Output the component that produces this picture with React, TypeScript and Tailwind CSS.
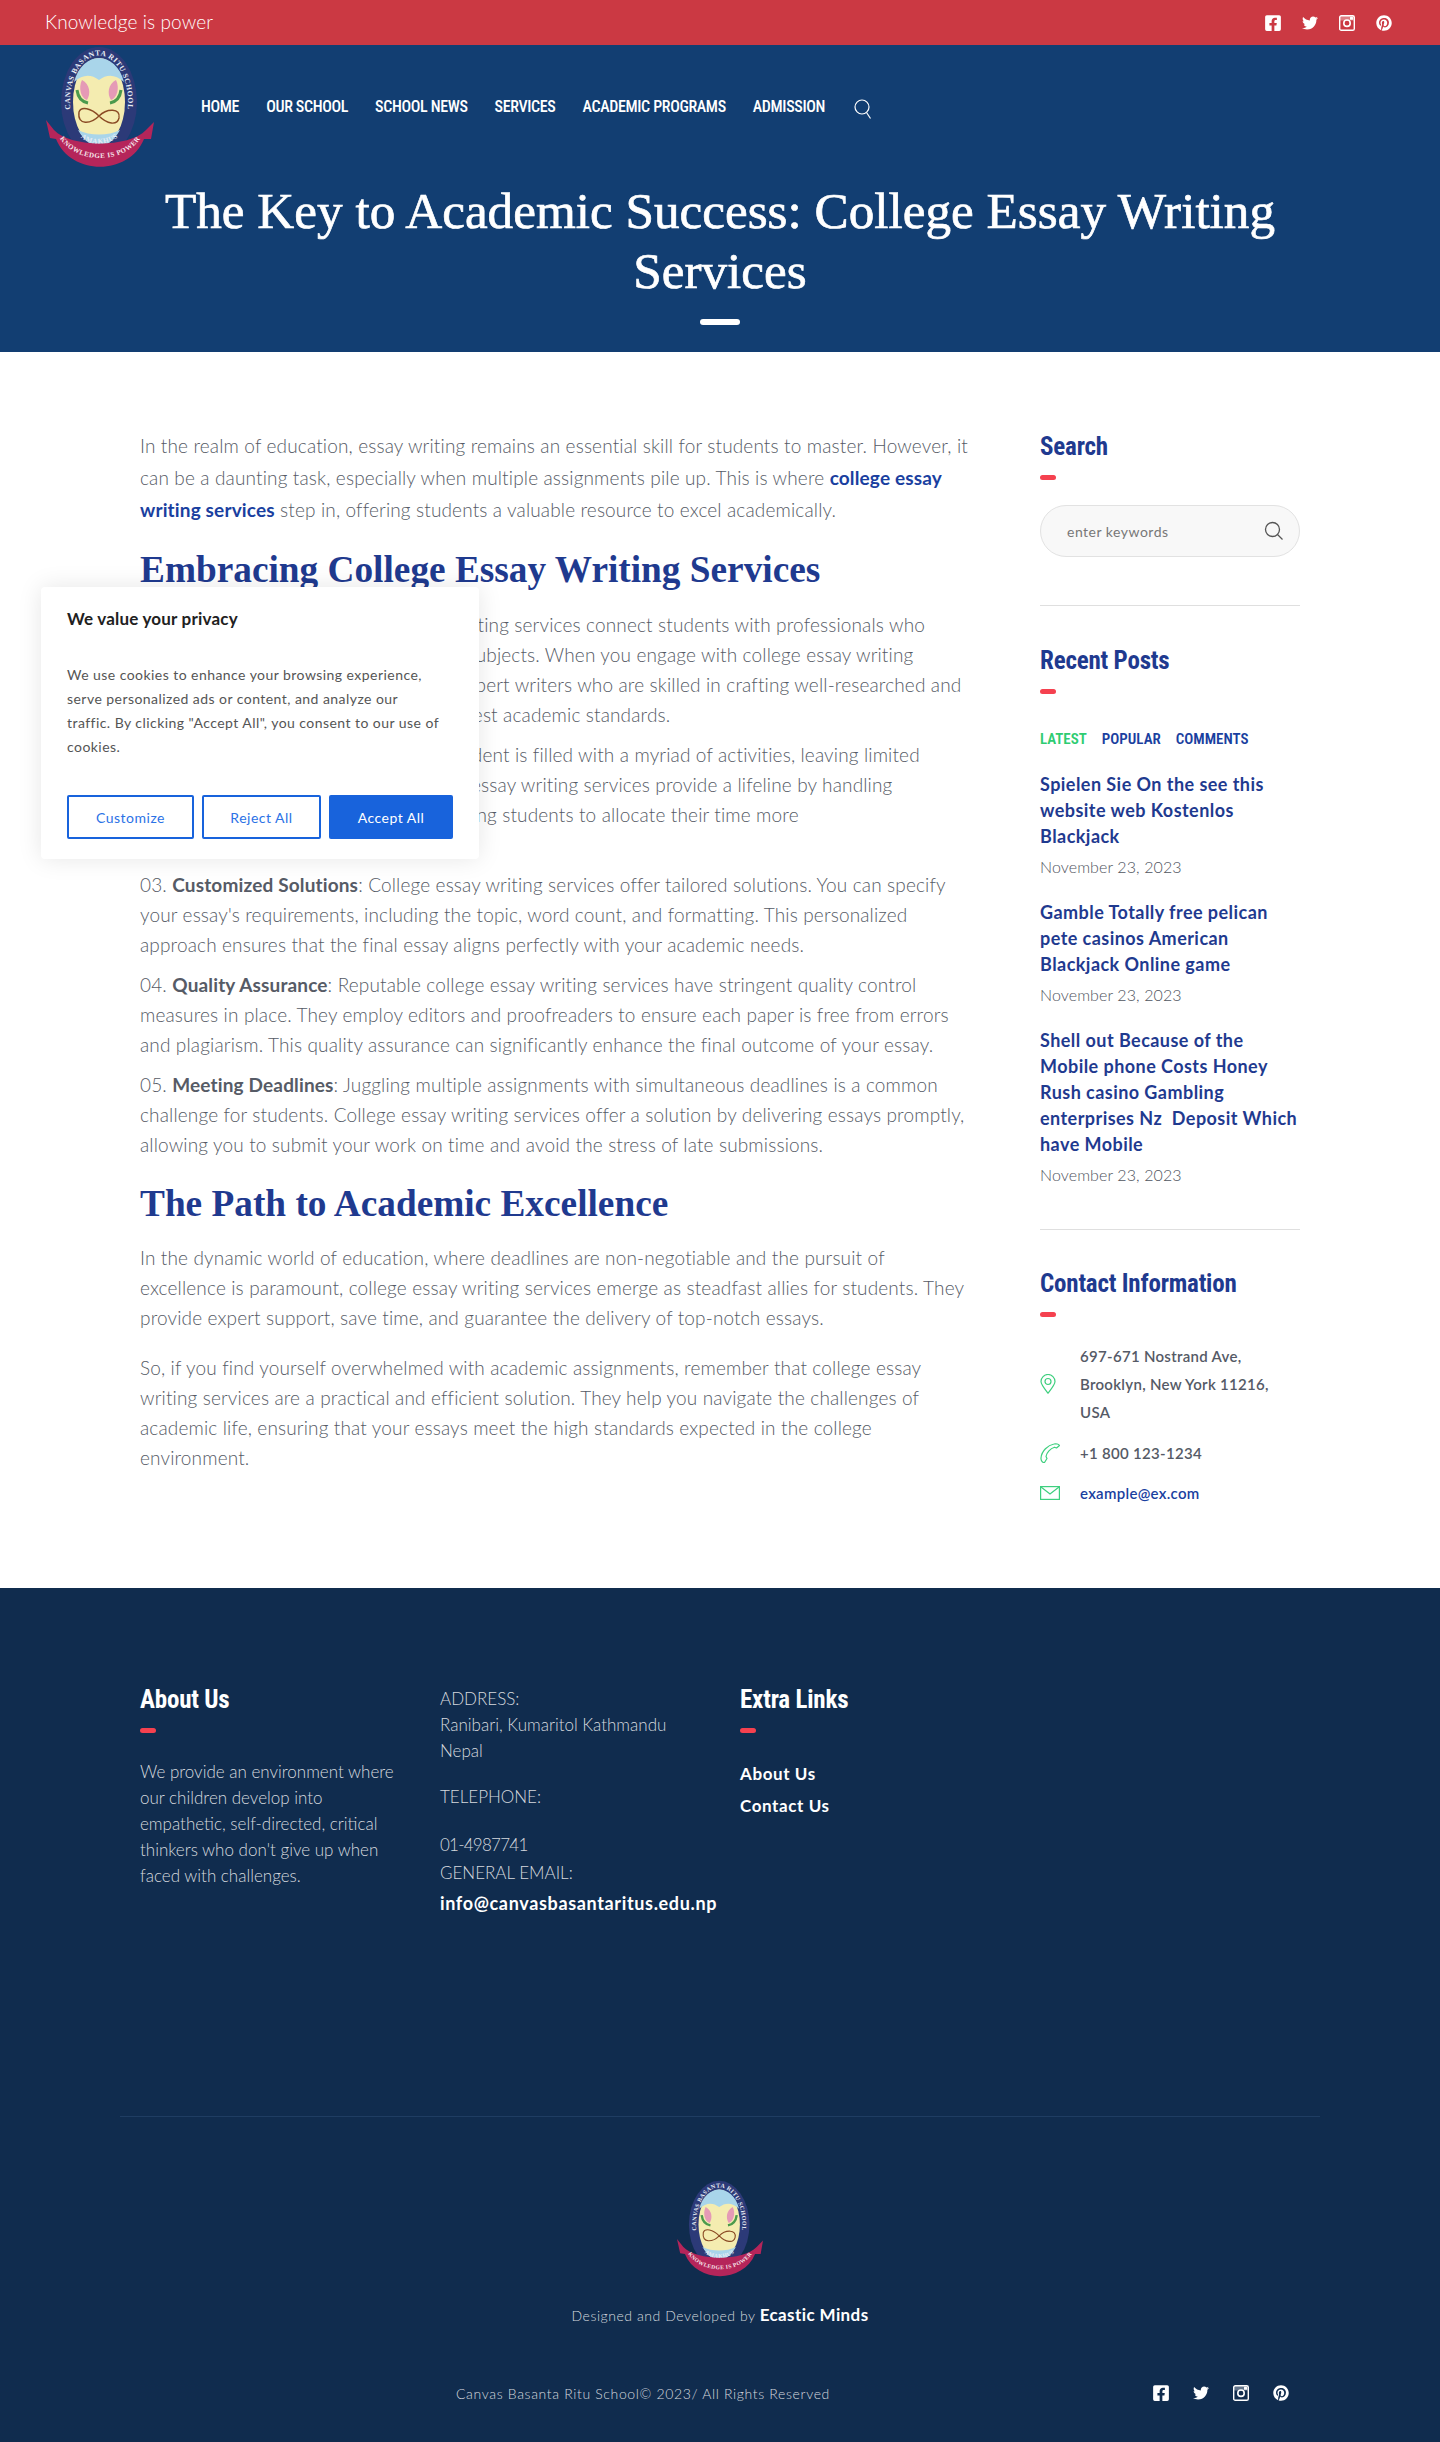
import React from "react";
import { FaFacebookSquare, FaTwitter, FaPinterest } from "react-icons/fa";

const body = "font-['Lato','Open_Sans',sans-serif]";
const narrow = "font-['Roboto',sans-serif] [font-stretch:75%]";
const serif = "font-['Liberation_Serif',serif]";

function Logo({ id, w, h }: { id: string; w: number; h: number }) {
  return (
    <svg width={w} height={h} viewBox="0 0 110 123" aria-hidden="true">
      <defs>
        <path id={`${id}-top`} d="M30 82 A29 46.5 0 1 1 78 82" />
        <path id={`${id}-mid`} d="M34 90 C44 100 64 100 74 90" />
        <path id={`${id}-rib`} d="M14 91 C30 119 80 119 96 91" />
      </defs>
      <ellipse cx="54" cy="56" rx="38" ry="55" fill="#2c3a78" />
      <ellipse cx="54" cy="56" rx="26" ry="44" fill="#f4ecb0" />
      <path d="M29 36 C33 20 44 12 54 12 C64 12 75 20 79 36 C70 28 62 28 54 34 C46 28 38 28 29 36 Z" fill="#a9d5ea" />
      <path d="M33 84 C45 90 63 90 75 84 C68 96 61 100 54 100 C47 100 40 96 33 84 Z" fill="#a9d5ea" />
      <path d="M37 34 C45 38 46 48 42 54 C36 52 33 42 37 34 Z M71 34 C75 42 72 52 66 54 C62 48 63 38 71 34 Z" fill="#e59ab6" />
      <path d="M32 44 C33 52 38 56 43 57 M76 44 C75 52 70 56 65 57" fill="none" stroke="#4b9a4c" strokeWidth="3" />
      <path d="M34 66 C32 80 46 78 54 70 C62 62 76 62 74 72 C72 80 62 78 54 70 C46 62 36 60 34 66 Z" fill="none" stroke="#8a4a24" strokeWidth="1.4" />
      <text fontFamily="Liberation Serif, serif" fontWeight="700" fontSize="7.5" fill="#e8edf5" letterSpacing="0.5">
        <textPath href={`#${id}-top`} startOffset="50%" textAnchor="middle">CANVAS BASANTA RITU SCHOOL</textPath>
      </text>
      <path d="M1 74 L9 84 C26 102 84 102 101 84 L109 76 L106 93 L99 93 C84 130 26 130 11 93 L5 92 Z" fill="#b5255a" />
      <text fontFamily="Liberation Serif, serif" fontWeight="700" fontSize="7" fill="#e8edf5" letterSpacing="0.6">
        <textPath href={`#${id}-mid`} startOffset="50%" textAnchor="middle">SAMAKHUSI</textPath>
      </text>
      <text fontFamily="Liberation Serif, serif" fontWeight="700" fontSize="7" fill="#f5e6ec" letterSpacing="0.5">
        <textPath href={`#${id}-rib`} startOffset="50%" textAnchor="middle">KNOWLEDGE IS POWER</textPath>
      </text>
    </svg>
  );
}

function InstagramOld() {
  return (
    <svg width="16" height="16" viewBox="0 0 16 16" aria-hidden="true">
      <rect x="0.7" y="0.7" width="14.6" height="14.6" rx="1.6" fill="none" stroke="white" strokeWidth="1.4" />
      <path d="M1 5.5 H15 V1 H1 Z" fill="white" opacity="0.35" />
      <circle cx="8" cy="8.2" r="3.2" fill="none" stroke="white" strokeWidth="1.6" />
      <rect x="11" y="1.8" width="3" height="3" rx="0.5" fill="white" />
    </svg>
  );
}

function Socials({ className }: { className: string }) {
  const cell = "flex w-[16px] justify-center";
  return (
    <div className={`flex items-center text-white ${className}`}>
      <span className={cell}><FaFacebookSquare size={18} /></span>
      <span className={cell}><FaTwitter size={16} /></span>
      <span className={cell}><InstagramOld /></span>
      <span className={cell}><FaPinterest size={16} /></span>
    </div>
  );
}

function RedBar() {
  return <div className="mt-[13px] h-[5px] w-[16px] rounded bg-[#f5414f]" />;
}

function WidgetTitle({ children, className = "" }: { children: React.ReactNode; className?: string }) {
  return (
    <div className={className}>
      <h3 className={`${narrow} text-[25px] leading-[30px] font-bold tracking-[-0.2px] text-[#1f3a8f]`}>{children}</h3>
      <RedBar />
    </div>
  );
}

function Post({ children }: { children: React.ReactNode }) {
  return (
    <div className="mb-[19px]">
      <a className="block text-[18px] leading-[26px] font-bold tracking-[0.45px] text-[#1f3a8f]">{children}</a>
      <div className="mt-[5px] text-[16px] leading-[26px] font-light tracking-[0.1px] text-[#4f545e]">November 23, 2023</div>
    </div>
  );
}

export default function App() {
  return (
    <div className={`${body} relative w-[1440px] bg-white text-[#565b66]`}>
      {/* top bar */}
      <div className="flex h-[45px] items-center justify-between bg-[#cb3943] pl-[45px] pr-[48px]">
        <span className="text-[19px] font-light tracking-[0.1px] text-white">Knowledge is power</span>
        <Socials className="gap-[21px]" />
      </div>

      {/* header + title */}
      <div className="h-[307px] bg-[#123e72] pt-px">
        <div className="flex pl-[45px]">
          <Logo id="head" w={110} h={123} />
          <nav className={`${narrow} ml-[46px] flex h-[123px] items-center gap-[27px] pb-px text-[16px] font-medium tracking-[-0.35px] text-white`}>
            <span>HOME</span>
            <span>OUR SCHOOL</span>
            <span>SCHOOL NEWS</span>
            <span>SERVICES</span>
            <span>ACADEMIC PROGRAMS</span>
            <span>ADMISSION</span>
            <svg className="ml-[2px] mt-[4px]" width="18" height="20" viewBox="0 0 18 20" fill="none" stroke="white" strokeWidth="1.2">
              <circle cx="8" cy="8" r="7" />
              <path d="M12.5 13.5 L16.5 19.5" />
            </svg>
          </nav>
        </div>
        <h1 className={`${serif} mx-auto mt-[12px] w-[1200px] text-center text-[51.2px] leading-[60px] font-normal text-white [-webkit-text-stroke:0.7px_white]`}>
          The Key to Academic Success: College Essay Writing
          <br />
          Services
        </h1>
        <div className="mx-auto mt-[18px] h-[6px] w-[40px] rounded bg-white" />
      </div>

      {/* content */}
      <div className="flex h-[1236px] pl-[140px] pt-[78px]">
        <main className="w-[850px] text-[19px] leading-[30px] font-light tracking-[0.15px]">
          <p className="leading-[32px]">
            In the realm of education, essay writing remains an essential skill for students to master. However, it
            <br />
            can be a daunting task, especially when multiple assignments pile up. This is where{" "}
            <a className="font-bold text-[#1a3fa0]">college essay</a>
            <br />
            <a className="font-bold text-[#1a3fa0]">writing services</a> step in, offering students a valuable resource to excel academically.
          </p>
          <h2 className={`${serif} mt-[21px] text-[37.3px] leading-[46px] font-bold tracking-normal text-[#1f3a8f]`}>Embracing College Essay Writing Services</h2>
          <p className="mt-[17px]">
            01. <b className="font-bold">Expert Assistance</b>: College essay writing services connect students with professionals who
            <br />
            possess in-depth knowledge of various subjects. When you engage with college essay writing
            <br />
            services, you gain access to a team of expert writers who are skilled in crafting well-researched and
            <br />
            articulate essays that adhere to the highest academic standards.
          </p>
          <p className="mt-[10px]">
            02. <b className="font-bold">Time Management</b>: The life of a student is filled with a myriad of activities, leaving limited
            <br />
            time for in-depth essay writing. College essay writing services provide a lifeline by handling
            <br />
            the research, writing, and revision, allowing students to allocate their time more
            <br />
            effectively.
          </p>
          <p className="mt-[10px]">
            03. <b className="font-bold">Customized Solutions</b>: College essay writing services offer tailored solutions. You can specify
            <br />
            your essay's requirements, including the topic, word count, and formatting. This personalized
            <br />
            approach ensures that the final essay aligns perfectly with your academic needs.
          </p>
          <p className="mt-[10px]">
            04. <b className="font-bold">Quality Assurance</b>: Reputable college essay writing services have stringent quality control
            <br />
            measures in place. They employ editors and proofreaders to ensure each paper is free from errors
            <br />
            and plagiarism. This quality assurance can significantly enhance the final outcome of your essay.
          </p>
          <p className="mt-[10px]">
            05. <b className="font-bold">Meeting Deadlines</b>: Juggling multiple assignments with simultaneous deadlines is a common
            <br />
            challenge for students. College essay writing services offer a solution by delivering essays promptly,
            <br />
            allowing you to submit your work on time and avoid the stress of late submissions.
          </p>
          <h2 className={`${serif} mt-[21px] text-[37.3px] leading-[46px] font-bold tracking-normal text-[#1f3a8f]`}>The Path to Academic Excellence</h2>
          <p className="mt-[16px]">
            In the dynamic world of education, where deadlines are non-negotiable and the pursuit of
            <br />
            excellence is paramount, college essay writing services emerge as steadfast allies for students. They
            <br />
            provide expert support, save time, and guarantee the delivery of top-notch essays.
          </p>
          <p className="mt-[20px]">
            So, if you find yourself overwhelmed with academic assignments, remember that college essay
            <br />
            writing services are a practical and efficient solution. They help you navigate the challenges of
            <br />
            academic life, ensuring that your essays meet the high standards expected in the college
            <br />
            environment.
          </p>
        </main>

        <aside className="ml-[50px] w-[260px]">
          <WidgetTitle className="mt-[2px]">Search</WidgetTitle>
          <div className="mt-[25px] flex h-[52px] items-center justify-between rounded-full border border-[#e2e2e2] bg-[#f8f8f8] pl-[26px] pr-[15px] text-[14px] tracking-[0.5px] text-[#777]">
            enter keywords
            <svg width="20" height="20" viewBox="0 0 20 20" fill="none" stroke="#555" strokeWidth="1.3">
              <circle cx="8.5" cy="8.5" r="7" />
              <path d="M13.5 13.5 L18.5 18.5" />
            </svg>
          </div>
          <div className="mt-[48px] h-px bg-[#dfdfdf]" />
          <WidgetTitle className="mt-[40px]">Recent Posts</WidgetTitle>
          <div className={`${narrow} mt-[34px] flex h-[22px] items-center gap-[15px] text-[15px] font-semibold`}>
            <span className="text-[#2ecc71]">LATEST</span>
            <span className="text-[#1a3fa0]">POPULAR</span>
            <span className="text-[#1a3fa0]">COMMENTS</span>
          </div>
          <div className="mt-[21px]">
            <Post>
              Spielen Sie On the see this
              <br />
              website web Kostenlos
              <br />
              Blackjack
            </Post>
            <Post>
              Gamble Totally free pelican
              <br />
              pete casinos American
              <br />
              Blackjack Online game
            </Post>
            <Post>
              Shell out Because of the
              <br />
              Mobile phone Costs Honey
              <br />
              Rush casino Gambling
              <br />
              enterprises Nz&nbsp; Deposit Which
              <br />
              have Mobile
            </Post>
          </div>
          <div className="mt-[41px] h-px bg-[#dfdfdf]" />
          <WidgetTitle className="mt-[39px]">Contact Information</WidgetTitle>
          <div className="mt-[25px] text-[15px] leading-[28px] font-semibold tracking-[0.3px] text-[#555a66]">
            <div className="flex items-center">
              <div className="w-[40px] shrink-0">
                <svg width="16" height="20" viewBox="0 0 16 20" fill="none" stroke="#3ecf7e" strokeWidth="1.2">
                  <path d="M8 19.2 C3.5 13.5 1 10.5 1 7.5 A7 7 0 0 1 15 7.5 C15 10.5 12.5 13.5 8 19.2 Z" />
                  <circle cx="8" cy="7.5" r="3" />
                </svg>
              </div>
              <div>
                697-671 Nostrand Ave,
                <br />
                Brooklyn, New York 11216,
                <br />
                USA
              </div>
            </div>
            <div className="mt-[13px] flex items-center">
              <div className="w-[40px] shrink-0">
                <svg width="20" height="20" viewBox="0 0 20 20" fill="none" stroke="#3ecf7e" strokeWidth="1.2" strokeLinejoin="round">
                  <path d="M1 15 C1.5 8 8 2 14 1 C16 .5 19 1 19.5 2.5 L16.5 5 L14.5 4.2 C10.5 5.5 6.5 9.5 6 13.5 L7 15.5 L4.5 19.5 C2.5 20 .8 17.5 1 15 Z" />
                </svg>
              </div>
              +1 800 123-1234
            </div>
            <div className="mt-[12px] flex items-center text-[#1a3fa0]">
              <div className="w-[40px] shrink-0">
                <svg width="20" height="14" viewBox="0 0 20 14" fill="none" stroke="#3ecf7e" strokeWidth="1.2">
                  <rect x="0.6" y="0.6" width="18.8" height="12.8" />
                  <path d="M1 1 L10 8 L19 1" />
                </svg>
              </div>
              example@ex.com
            </div>
          </div>
        </aside>
      </div>

      {/* cookie notice */}
      <div className="absolute left-[41px] top-[587px] w-[438px] rounded-[4px] bg-white px-[26px] pb-[20px] pt-[19px] shadow-[0_0_24px_rgba(0,0,0,0.1)]">
        <div className="text-[17px] leading-[26px] font-bold tracking-[0.2px] text-[#212121]">We value your privacy</div>
        <p className="mt-[31px] text-[14px] leading-[24px] tracking-[0.45px] text-[#555]">
          We use cookies to enhance your browsing experience,
          <br />
          serve personalized ads or content, and analyze our
          <br />
          traffic. By clicking "Accept All", you consent to our use of
          <br />
          cookies.
        </p>
        <div className="mt-[36px] flex gap-[8px] text-[14px] tracking-[0.5px]">
          <button className="h-[44px] w-[127px] rounded-[2px] border-2 border-[#1863dc] text-[#2b72e6]">Customize</button>
          <button className="h-[44px] w-[119px] rounded-[2px] border-2 border-[#1863dc] text-[#2b72e6]">Reject All</button>
          <button className="h-[44px] w-[124px] rounded-[2px] bg-[#1863dc] text-white">Accept All</button>
        </div>
      </div>

      {/* footer */}
      <footer className="h-[854px] bg-[#102c4e]">
        <div className="flex h-[528px] pl-[140px] pt-[97px]">
          <div className="w-[300px]">
            <h3 className={`${narrow} text-[25px] leading-[30px] font-bold tracking-[-0.2px] text-white`}>About Us</h3>
            <RedBar />
            <p className="mt-[26px] text-[17px] leading-[26px] font-light text-[#d5d9de]">
              We provide an environment where
              <br />
              our children develop into
              <br />
              empathetic, self-directed, critical
              <br />
              thinkers who don't give up when
              <br />
              faced with challenges.
            </p>
          </div>
          <div className="w-[300px] pt-px text-[17px] leading-[26px] font-light text-[#d5d9de]">
            <div>ADDRESS:</div>
            <div>Ranibari, Kumaritol Kathmandu</div>
            <div>Nepal</div>
            <div className="mt-[20px]">TELEPHONE:</div>
            <div className="mt-[22px] tracking-[-0.75px]">01-4987741</div>
            <div className="mt-[2px]">GENERAL EMAIL:</div>
            <div className="mt-[4px] text-[18px] font-bold tracking-[0.65px] text-white">info@canvasbasantaritus.edu.np</div>
          </div>
          <div>
            <h3 className={`${narrow} text-[25px] leading-[30px] font-bold tracking-[-0.2px] text-white`}>Extra Links</h3>
            <RedBar />
            <div className="mt-[25px] text-[17px] leading-[32px] font-bold tracking-[0.6px] text-white">
              <div>About Us</div>
              <div>Contact Us</div>
            </div>
          </div>
        </div>
        <div className="mx-auto h-px w-[1200px] bg-[#1f3d62]" />
        <div className="mt-[63px] flex justify-center">
          <Logo id="foot" w={90} h={98} />
        </div>
        <div className="mt-[24px] h-[26px] text-center text-[14px] leading-[26px] font-light tracking-[0.55px] text-[#d5d9de]">
          Designed and Developed by <span className="text-[17px] font-bold tracking-[0.4px] text-white">Ecastic Minds</span>
        </div>
        <div className="mt-[52px] flex h-[26px] items-center pl-[456px] pr-[151px]">
          <span className="text-[14px] font-light tracking-[0.65px] text-[#d5d9de]">Canvas Basanta Ritu School© 2023/ All Rights Reserved</span>
          <Socials className="ml-auto gap-[24px]" />
        </div>
      </footer>
    </div>
  );
}
